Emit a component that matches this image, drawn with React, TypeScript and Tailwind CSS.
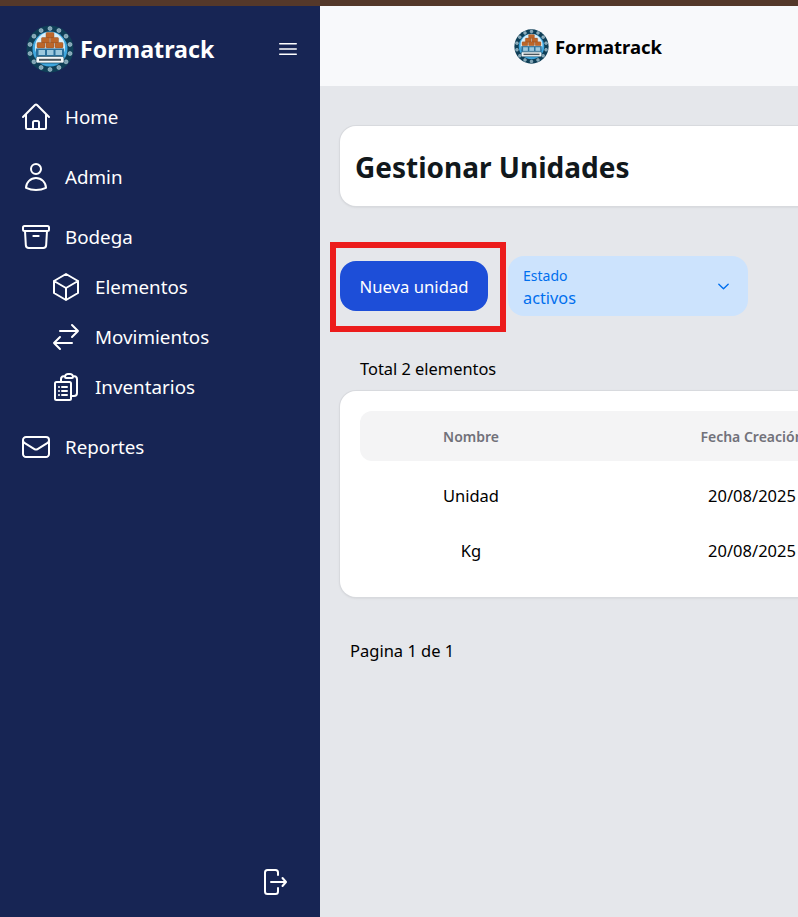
import {
  HiOutlineHome,
  HiOutlineUser,
  HiOutlineArchiveBox,
  HiOutlineCube,
  HiOutlineArrowsRightLeft,
  HiOutlineClipboardDocumentList,
  HiOutlineEnvelope,
  HiOutlineBars3,
  HiOutlineChevronDown,
} from "react-icons/hi2";
import type { IconType } from "react-icons";

function Logo({ size }: { size: number }) {
  const dots = Array.from({ length: 14 }, (_, i) => {
    const a = (i / 14) * Math.PI * 2 - Math.PI / 2;
    return { x: 24 + Math.cos(a) * 20.5, y: 24 + Math.sin(a) * 20.5 };
  });
  const boxes = [
    [20, 7.5],
    [15.5, 12.5],
    [24.5, 12.5],
    [11, 17.5],
    [20, 17.5],
    [29, 17.5],
  ];
  return (
    <svg width={size} height={size} viewBox="0 0 48 48" className="shrink-0">
      <circle cx="24" cy="24" r="23.5" fill="#0f3f57" />
      {dots.map((d, i) => (
        <circle key={i} cx={d.x} cy={d.y} r="2" fill="#7ea4b5" stroke="#c9dce4" strokeWidth="0.5" />
      ))}
      <circle cx="24" cy="24" r="17.5" fill="#3fa7de" />
      <circle cx="24" cy="22" r="15" fill="#d9eef8" />
      {boxes.map(([x, y], i) => (
        <rect key={i} x={x} y={y} width="8" height="5.5" rx="1" fill="#bd6628" stroke="#8a4a1f" strokeWidth="0.4" />
      ))}
      <rect x="10" y="23.5" width="28" height="7.5" fill="#2a6f99" />
      <rect x="12.5" y="25" width="6.5" height="5" fill="#9cc8dd" />
      <rect x="21" y="25" width="6.5" height="5" fill="#9cc8dd" />
      <rect x="29.5" y="25" width="6.5" height="5" fill="#9cc8dd" />
      <rect x="10" y="31.5" width="28" height="6.5" rx="1.5" fill="#f4f7f8" stroke="#0f3f57" strokeWidth="0.7" />
      <rect x="13" y="33.8" width="22" height="2" fill="#4a565d" />
    </svg>
  );
}

function NavItem({ icon: Icon, label, sub }: { icon: IconType; label: string; sub?: boolean }) {
  return (
    <div className={sub ? "flex h-[50px] items-center gap-[13px] pl-[50px]" : "flex h-[50px] items-center gap-[13px] pl-[20px]"}>
      <Icon size={32} className="shrink-0" />
      <span>{label}</span>
    </div>
  );
}

export default function App() {
  return (
    <div className="flex h-[917px] w-[798px] flex-col overflow-hidden bg-[#e5e7eb] font-['Noto_Sans','Open_Sans',sans-serif] text-black">
      <div className="h-[6px] shrink-0 bg-[#54382a]" />
      <div className="flex min-h-0 flex-1">
        <aside className="flex w-80 shrink-0 flex-col bg-[#172554] text-[18.8px] text-white">
          <div className="flex h-[86px] items-center justify-between pl-[26px] pr-[20px]">
            <div className="flex items-center gap-[6px]">
              <Logo size={48} />
              <span className="text-[23.2px] font-bold">Formatrack</span>
            </div>
            <HiOutlineBars3 size={24} />
          </div>
          <nav className="flex flex-col">
            <NavItem icon={HiOutlineHome} label="Home" />
            <div className="mt-[10px]">
              <NavItem icon={HiOutlineUser} label="Admin" />
            </div>
            <div className="mt-[10px]">
              <NavItem icon={HiOutlineArchiveBox} label="Bodega" />
            </div>
            <NavItem icon={HiOutlineCube} label="Elementos" sub />
            <NavItem icon={HiOutlineArrowsRightLeft} label="Movimientos" sub />
            <NavItem icon={HiOutlineClipboardDocumentList} label="Inventarios" sub />
            <div className="mt-[10px]">
              <NavItem icon={HiOutlineEnvelope} label="Reportes" />
            </div>
          </nav>
          <div className="mt-auto flex justify-end pb-[21px] pr-[32px]">
            <svg width="28" height="30" viewBox="0 0 28 30" fill="none" stroke="white" strokeWidth="2" strokeLinecap="round" strokeLinejoin="round">
              <path d="M18 9V6.500A2.500 2.500 0 0 0 15.500 4h-8A2.500 2.500 0 0 0 5 6.500v19A2.500 2.500 0 0 0 7.500 28h8a2.500 2.500 0 0 0 2.500-2.500V22" />
              <path d="M11 16h15M22.500 12l3.500 4-3.500 4" />
            </svg>
          </div>
        </aside>
        <main className="min-w-0 flex-1 overflow-hidden">
          <header className="flex h-[80px] items-center justify-center gap-[6px] bg-[#f8f9fb] pl-[58px] pt-[1px]">
            <Logo size={35} />
            <span className="text-[18.5px] font-bold">Formatrack</span>
          </header>
          <div className="relative w-[1000px] pl-[20px] pt-[40px]">
            <div className="flex h-[80px] items-center rounded-2xl bg-white pl-[15px] pt-[2px] shadow-sm ring-1 ring-[#d8dade]">
              <h1 className="text-[28px] font-bold text-[#11181c]">Gestionar Unidades</h1>
            </div>
            <div className="mt-[50px] flex items-center gap-[20px]">
              <button className="h-[50px] w-[148px] rounded-2xl bg-[#1d4ed8] pt-[2px] text-[16.7px] text-white">Nueva unidad</button>
              <div className="flex h-[60px] w-[240px] items-center justify-between rounded-2xl bg-[#cce3fd] pl-[15px] pr-[17px] pt-[3px] text-[#006fee]">
                <div className="flex flex-col">
                  <span className="text-[14px] leading-[20px]">Estado</span>
                  <span className="text-[16.3px] leading-[24px]">activos</span>
                </div>
                <HiOutlineChevronDown size={15} strokeWidth={2.2} className="-mt-[3px]" />
              </div>
            </div>
            <p className="mt-[41px] pl-[20px] text-[16.4px] leading-[24px]">Total 2 elementos</p>
            <div className="mt-[10px] h-[206px] rounded-2xl bg-white pl-[20px] pt-[20px] shadow-sm ring-1 ring-[#d8dade]">
              <div className="grid h-[50px] grid-cols-[222px_340px] items-center rounded-xl bg-[#f4f4f5] text-center text-[14px] font-semibold text-[#71717a]">
                <span>Nombre</span>
                <span>Fecha Creación</span>
              </div>
              <div className="grid h-[70px] grid-cols-[222px_340px] items-center text-center text-[16.5px]">
                <span>Unidad</span>
                <span>20/08/2025</span>
              </div>
              <div className="grid h-[40px] grid-cols-[222px_340px] items-center text-center text-[16.5px]">
                <span>Kg</span>
                <span>20/08/2025</span>
              </div>
            </div>
            <p className="mt-[42px] pl-[10px] text-[16.5px] leading-[24px]">Pagina 1 de 1</p>
            <div className="absolute left-[10px] top-[156px] h-[90px] w-[176px] border-[6px] border-[#ec1c1c]" />
          </div>
        </main>
      </div>
    </div>
  );
}
